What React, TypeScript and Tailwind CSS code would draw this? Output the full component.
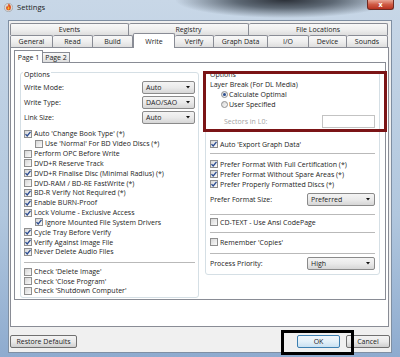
import React from "react";

function Box({ on }: { on?: boolean }) {
  return (
    <span className="flex h-[8px] w-[8px] shrink-0 items-center justify-center border border-[#8f8f8f] bg-gradient-to-br from-[#d6d6d6] to-[#fbfbfb]">
      {on && (
        <svg width="6" height="6" viewBox="0 0 6 6">
          <path d="M0.5 3.1L2.2 5L5.5 0.8" fill="none" stroke="#2a4b90" strokeWidth="1.3" />
        </svg>
      )}
    </span>
  );
}

function Check({ label, on, sub, h = "h-[9.83px]" }: { label: string; on?: boolean; sub?: boolean; h?: string }) {
  return (
    <div className={`flex items-center ${h} ${sub ? "pl-[11px]" : ""}`}>
      <Box on={on} />
      <span className="ml-[2px] whitespace-nowrap">{label}</span>
    </div>
  );
}

function Radio({ on, label }: { on?: boolean; label: string }) {
  return (
    <div className="flex h-[10px] items-center pl-[11px]">
      <span className="flex h-[7px] w-[7px] shrink-0 items-center justify-center rounded-full border border-[#8f8f8f] bg-gradient-to-br from-[#d6d6d6] to-[#fbfbfb]">
        {on && <span className="h-[3px] w-[3px] rounded-full bg-[#2b4d8f]" />}
      </span>
      <span className="ml-[1px] whitespace-nowrap">{label}</span>
    </div>
  );
}

function Select({ value, w }: { value: string; w: string }) {
  return (
    <div className={`flex h-[13px] ${w} items-center justify-between rounded-[2px] border border-[#8a8a8a] bg-gradient-to-b from-[#f4f4f4] via-[#eaeaea] to-[#d6d6d6] pl-[3px] pr-[4px]`}>
      <span>{value}</span>
      <svg width="4" height="3" viewBox="0 0 4 3">
        <path d="M0 0H4L2 2.6Z" fill="#111" />
      </svg>
    </div>
  );
}

function Sep() {
  return <div className="h-px bg-[#b9b9b9]" />;
}

const row1 = [
  ["Events", "w-[119px]"],
  ["Registry", "w-[120px]"],
  ["File Locations", "w-[139px]"],
];
const row2 = [
  ["General", "w-[43px]"],
  ["Read", "w-[40px]"],
  ["Build", "w-[40px]"],
  ["Write", "w-[42px]"],
  ["Verify", "w-[39px]"],
  ["Graph Data", "w-[54px]"],
  ["I/O", "w-[41px]"],
  ["Device", "w-[38px]"],
  ["Sounds", "w-[41px]"],
];

const tabBase =
  "flex items-center justify-center border-t border-r border-[#898c95] rounded-t-[2px] bg-gradient-to-b from-[#f8f8f8] via-[#efefef] to-[#dedede]";

export default function App() {
  return (
    <div className="relative flex h-[357px] w-[400px] flex-col overflow-hidden bg-[radial-gradient(ellipse_110px_18px_at_285px_0px,#2c3139_0%,#5d6874_45%,transparent_100%),linear-gradient(180deg,#c8d7e7,#b1c7de_60%,#8eabcf)] font-['Open_Sans',sans-serif] text-[7px] leading-none text-[#1b1b1b]">
      {/* title bar */}
      <div className="flex h-[20px] shrink-0 items-start">
        <svg className="ml-[4px] mt-[3px]" width="9" height="9" viewBox="0 0 9 9">
          <circle cx="4.5" cy="4.5" r="4.2" fill="#d8d8d8" stroke="#8a8a8a" strokeWidth="0.5" />
          <path d="M4.5 0.6C6.8 2 7.6 4.2 6.6 6.2C5.8 7.6 3.2 7.6 2.4 6.2C1.6 4.6 2.6 3.4 3.3 2.6C3.4 3.6 3.9 4 4.3 4C4 2.6 4.2 1.6 4.5 0.6Z" fill="#e0531e" />
          <path d="M4.5 3.6C5.6 4.4 5.7 5.6 5 6.3C4.5 6.8 3.7 6.6 3.6 5.9C3.5 5.2 4.2 4.7 4.5 3.6Z" fill="#f8c22c" />
        </svg>
        <span className="ml-[4px] mt-[4px] text-[7.6px]">Settings</span>
        <div className="ml-auto mr-[6px] flex h-[10px] w-[27px] items-center justify-center rounded-b-[3px] border border-t-0 border-[#6e2a22] bg-gradient-to-b from-[#e7a595] via-[#cf5a44] to-[#b8321f]">
          <span className="text-[7px] font-bold text-white">x</span>
        </div>
      </div>

      {/* client area */}
      <div className="ml-[8px] flex h-[333px] w-[384px] flex-col border border-[#7f8fa3] bg-[#f0f0f0] pl-[1px] pt-[2px]">
        {/* tab rows */}
        <div className="flex h-[12px]">
          {row1.map(([t, w], i) => (
            <div key={t} className={`${tabBase} ${w} ${i === 0 ? "border-l" : ""}`}>
              {t}
            </div>
          ))}
        </div>
        <div className="flex h-[12px] items-end">
          {row2.map(([t, w], i) =>
            t === "Write" ? (
              <div key={t} className={`relative z-10 -mb-px flex h-[15px] ${w} items-center justify-center rounded-t-[2px] border-x border-t border-[#898c95] bg-white`}>
                {t}
              </div>
            ) : (
              <div key={t} className={`${tabBase} h-full ${w} ${i === 0 ? "border-l" : ""}`}>
                {t}
              </div>
            )
          )}
        </div>

        {/* tab panel */}
        <div className="flex h-[280px] w-[379px] flex-col border border-[#898c95] bg-white pl-[3px] pt-[2px]">
          <div className="flex h-[12px] items-end">
            <div className="relative z-10 -mb-px flex h-[13px] w-[29px] items-center justify-center border-x border-t border-[#898c95] bg-white">
              Page 1
            </div>
            <div className="flex h-[10px] w-[27px] items-center justify-center border-r border-t border-[#898c95] bg-gradient-to-b from-[#f8f8f8] to-[#dedede]">
              Page 2
            </div>
          </div>

          <div className="flex h-[238px] w-[372px] items-start gap-[6px] border border-[#898c95] pl-[5px] pt-[9px]">
            {/* left options group */}
            <div className="relative flex h-[226px] w-[179px] flex-col rounded-[3px] border border-[#d5dfe5] px-[3px] pt-[7px]">
              <span className="absolute left-[2px] top-[-2px] bg-white px-[1px] leading-[8px]">Options</span>
              {[
                ["Write Mode:", "Auto"],
                ["Write Type:", "DAO/SAO"],
                ["Link Size:", "Auto"],
              ].map(([l, v]) => (
                <div key={l} className="flex h-[15px] items-center justify-between">
                  <span>{l}</span>
                  <Select value={v} w="w-[53px]" />
                </div>
              ))}
              <div className="mt-[4px]">
                <Check on label="Auto 'Change Book Type' (*)" />
                <Check sub label="Use 'Normal' For BD Video Discs (*)" />
                <Check label="Perform OPC Before Write" />
                <Check label="DVD+R Reserve Track" />
                <Check on label="DVD+R Finalise Disc (Minimal Radius) (*)" />
                <Check label="DVD-RAM / BD-RE FastWrite (*)" />
                <Check on label="BD-R Verify Not Required (*)" />
                <Check on label="Enable BURN-Proof" />
                <Check on label="Lock Volume - Exclusive Access" />
                <Check on sub label="Ignore Mounted File System Drivers" />
                <Check on label="Cycle Tray Before Verify" />
                <Check on label="Verify Against Image File" />
                <Check on label="Never Delete Audio Files" />
              </div>
              <div className="mt-[5px]">
                <Sep />
              </div>
              <div className="mt-[4px]">
                <Check h="h-[9.6px]" label="Check 'Delete Image'" />
                <Check h="h-[9.6px]" label="Check 'Close Program'" />
                <Check h="h-[9.6px]" label="Check 'Shutdown Computer'" />
              </div>
            </div>

            {/* right options group */}
            <div className="relative flex h-[203px] w-[175px] flex-col rounded-[3px] border border-[#d5dfe5] px-[4px] pt-[6px]">
              <span className="absolute left-[3px] top-[-2px] bg-white px-[1px] leading-[8px]">Options</span>
              <div className="flex h-[10px] items-center">Layer Break (For DL Media)</div>
              <Radio on label="Calculate Optimal" />
              <Radio label="User Specified" />
              <div className="mt-[6px] flex h-[13px] items-center justify-between pl-[14px]">
                <span className="text-[#a3a3a3]">Sectors in L0:</span>
                <div className="h-[13px] w-[53px] border border-[#c3c3c3] bg-white" />
              </div>
              <div className="mt-[11px]">
                <Check h="h-[10px]" on label="Auto 'Export Graph Data'" />
              </div>
              <div className="mt-[4px]">
                <Sep />
              </div>
              <div className="mt-[5px]">
                <Check h="h-[10px]" on label="Prefer Format With Full Certification (*)" />
                <Check h="h-[10px]" on label="Prefer Format Without Spare Areas (*)" />
                <Check h="h-[10px]" on label="Prefer Properly Formatted Discs (*)" />
              </div>
              <div className="mt-[4px] flex h-[13px] items-center justify-between">
                <span>Prefer Format Size:</span>
                <Select value="Preferred" w="w-[68px]" />
              </div>
              <div className="mt-[8px]">
                <Sep />
              </div>
              <div className="mt-[2px]">
                <Check h="h-[10px]" label="CD-TEXT - Use Ansi CodePage" />
              </div>
              <div className="mt-[5px]">
                <Sep />
              </div>
              <div className="mt-[4px]">
                <Check h="h-[10px]" label="Remember 'Copies'" />
              </div>
              <div className="mt-[6px]">
                <Sep />
              </div>
              <div className="mt-[2px] flex h-[14px] items-center justify-between">
                <span>Process Priority:</span>
                <Select value="High" w="w-[68px]" />
              </div>
            </div>
          </div>
        </div>

        {/* buttons */}
        <div className="mt-[8px] flex pr-[1px]">
          <div className="flex h-[13px] w-[67px] items-center justify-center rounded-[2px] border border-[#707070] bg-gradient-to-b from-[#f3f3f3] via-[#eaeaea] to-[#d0d0d0]">
            Restore Defaults
          </div>
          <div className="ml-auto flex h-[13px] w-[43px] items-center justify-center rounded-[2px] border border-[#3c7fb1] bg-gradient-to-b from-[#f0f7fc] via-[#e3f0f9] to-[#c9e1f2]">
            OK
          </div>
          <div className="ml-[6px] flex h-[13px] w-[44px] items-center justify-center rounded-[2px] border border-[#707070] bg-gradient-to-b from-[#f3f3f3] via-[#eaeaea] to-[#d0d0d0]">
            Cancel
          </div>
        </div>
      </div>

      {/* annotation boxes drawn over the dialog */}
      <div className="absolute left-[203px] top-[71px] h-[61px] w-[184px] border-[3px] border-[#7b1416]" />
      <div className="absolute left-[281px] top-[330px] h-[25px] w-[73px] border-[3px] border-black" />
    </div>
  );
}
